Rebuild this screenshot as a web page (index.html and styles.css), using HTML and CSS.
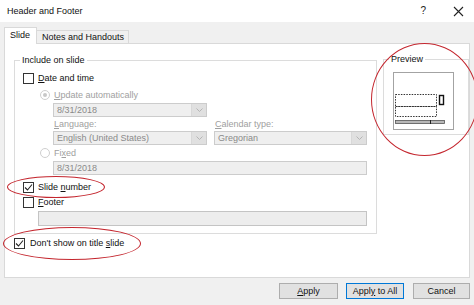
FILE: index.html
```html
<!DOCTYPE html>
<html>
<head>
<meta charset="utf-8">
<link rel="stylesheet" href="styles.css">
</head>
<body>
<div class="dialog">
  <div class="titlebar">
    <span class="title">Header and Footer</span>
    <span class="help">?</span>
    <svg class="close" width="11" height="11" viewBox="0 0 11 11"><path d="M1 1L10 10M10 1L1 10" stroke="#222" stroke-width="1.1" fill="none"/></svg>
  </div>
  <div class="tabs">
    <div class="tab active">Slide</div>
    <div class="tab">Notes and Handouts</div>
  </div>
  <div class="panel">
    <div class="panel-top">
      <div class="group include">
        <div class="legend">Include on slide</div>
        <div class="row r-date"><span class="cb"></span><span class="lbl"><u>D</u>ate and time</span></div>
        <div class="row r-update dis"><span class="rb on"></span><span class="lbl"><u>U</u>pdate automatically</span></div>
        <div class="select s-date"><span class="val">8/31/2018</span><span class="arrow"><svg width="7" height="4" viewBox="0 0 7 4"><path d="M0.5 0.5L3.5 3.5L6.5 0.5" stroke="#b5b5b5" fill="none"/></svg></span></div>
        <div class="two-col">
          <div class="col c-lang">
            <div class="flabel"><u>L</u>anguage:</div>
            <div class="select s-lang"><span class="val">English (United States)</span><span class="arrow"><svg width="7" height="4" viewBox="0 0 7 4"><path d="M0.5 0.5L3.5 3.5L6.5 0.5" stroke="#b5b5b5" fill="none"/></svg></span></div>
          </div>
          <div class="col c-cal">
            <div class="flabel"><u>C</u>alendar type:</div>
            <div class="select s-cal"><span class="val">Gregorian</span><span class="arrow"><svg width="7" height="4" viewBox="0 0 7 4"><path d="M0.5 0.5L3.5 3.5L6.5 0.5" stroke="#b5b5b5" fill="none"/></svg></span></div>
          </div>
        </div>
        <div class="row r-fixed dis"><span class="rb"></span><span class="lbl">Fi<u>x</u>ed</span></div>
        <div class="input i-fixed">8/31/2018</div>
        <div class="row r-slide"><span class="cb checked"><svg width="9" height="9" viewBox="0 0 9 9"><path d="M1 4.5L3.5 7L8 1.5" stroke="#222" stroke-width="1.1" fill="none"/></svg></span><span class="lbl">Slide <u>n</u>umber</span></div>
        <div class="row r-footer"><span class="cb"></span><span class="lbl"><u>F</u>ooter</span></div>
        <div class="input i-footer"></div>
      </div>
      <div class="group preview">
        <div class="legend">Preview</div>
        <svg class="pic" width="61" height="58" viewBox="0 0 61 58">
          <rect x="0.5" y="0.5" width="60" height="57" fill="#fff" stroke="#a3a3a3"/>
          <rect x="2.5" y="22.5" width="41" height="12" fill="none" stroke="#333" stroke-dasharray="1.5 1.2"/>
          <rect x="2.5" y="34.5" width="41" height="10" fill="none" stroke="#333" stroke-dasharray="1.5 1.2"/>
          <rect x="46.5" y="23.5" width="4" height="9" fill="none" stroke="#111" stroke-width="1.4"/>
          <rect x="2.5" y="48.5" width="49" height="3" fill="#b8b8b8" stroke="#555" stroke-width="0.8"/>
          <line x1="37.5" y1="48" x2="37.5" y2="52" stroke="#222"/>
        </svg>
      </div>
    </div>
    <div class="row r-title"><span class="cb checked"><svg width="9" height="9" viewBox="0 0 9 9"><path d="M1 4.5L3.5 7L8 1.5" stroke="#222" stroke-width="1.1" fill="none"/></svg></span><span class="lbl">Don't show on title <u>s</u>lide</span></div>
  </div>
  <div class="buttons">
    <div class="btn"><u>A</u>pply</div>
    <div class="btn default">Appl<u>y</u> to All</div>
    <div class="btn">Cancel</div>
  </div>
  <div class="mark m-preview"></div>
  <div class="mark m-slide"></div>
  <div class="mark m-title"></div>
</div>
</body>
</html>
```

FILE: styles.css
```css
html, body {
  margin: 0;
  padding: 0;
}
body {
  width: 474px;
  height: 305px;
  overflow: hidden;
  background: #f0f0f0;
  font-family: "Liberation Sans", Arial, sans-serif;
  font-size: 9px;
  line-height: 12px;
  color: #111;
}
u { text-decoration: underline; text-underline-offset: 1px; }

.dialog {
  position: relative;
  width: 474px;
  height: 305px;
  overflow: hidden;
}

.titlebar {
  height: 22px;
  background: #fff;
  display: flex;
  align-items: center;
  padding-left: 7px;
  box-sizing: border-box;
}
.title { font-size: 9px; color: #111; }
.help { margin-left: auto; margin-right: 27px; font-size: 10px; color: #222; }
.close { margin-right: 10px; }

.tabs {
  height: 21px;
  display: flex;
  align-items: flex-end;
  padding-left: 4px;
  box-sizing: border-box;
}
.tab {
  height: 12px;
  line-height: 12px;
  padding: 0 4px 0 5px;
  border: 1px solid #d9d9d9;
  border-bottom: none;
  background: #f0f0f0;
  position: relative;
}
.tab.active {
  height: 16px;
  line-height: 15px;
  background: #fff;
  padding: 0 6px 0 5px;
  margin-bottom: -1px;
  z-index: 1;
}
.tab + .tab { border-left: none; }

.panel {
  margin-left: 4px;
  width: 466px;
  height: 235px;
  box-sizing: border-box;
  background: #fff;
  border: 1px solid #d9d9d9;
}
.panel-top {
  display: flex;
  align-items: flex-start;
}

.group {
  border: 1px solid #dcdcdc;
  box-sizing: border-box;
}
.include {
  margin-left: 9px;
  margin-top: 16px;
  width: 363px;
  padding: 0 8px 7px 8px;
}
.preview {
  margin-left: 6px;
  margin-top: 15px;
  width: 86px;
  height: 76px;
  padding-left: 9px;
}
.legend {
  display: block;
  width: max-content;
  height: 12px;
  line-height: 12px;
  margin-top: -7px;
  margin-left: -3px;
  padding: 0 2px;
  background: #fff;
}
.preview .legend { margin-left: -4px; }
.pic { display: block; margin-top: 7px; }

.row {
  display: flex;
  align-items: center;
  height: 14px;
  line-height: 14px;
}
.lbl { margin-left: 4px; }
.cb {
  width: 11px;
  height: 11px;
  box-sizing: border-box;
  border: 1px solid #333;
  background: #fff;
  display: flex;
  align-items: center;
  justify-content: center;
  flex: none;
}
.rb {
  width: 10px;
  height: 10px;
  box-sizing: border-box;
  border: 1px solid #cfcfcf;
  border-radius: 50%;
  background: #fff;
  margin-left: 17px;
  flex: none;
  position: relative;
}
.rb.on::after {
  content: "";
  position: absolute;
  left: 2px; top: 2px;
  width: 4px; height: 4px;
  border-radius: 50%;
  background: #c8c8c8;
}
.dis .lbl { color: #a0a0a0; }

.r-date { margin-top: 5px; }
.r-update { margin-top: 3px; }
.r-fixed { margin-top: 1px; }
.r-slide { margin-top: 5px; }
.r-footer { margin-top: 1px; }
.r-title { margin-left: 9px; margin-top: 2px; }
.r-title .lbl { margin-left: 5px; }

.select, .input {
  height: 14px;
  box-sizing: border-box;
  border: 1px solid #cccccc;
  background: #efefef;
  color: #8a8a8a;
  display: flex;
  align-items: center;
}
.select .val, .input { padding-left: 3px; line-height: 12px; }
.select .val { flex: 1; }
.arrow {
  width: 14px;
  height: 12px;
  background: #e0e0e0;
  border-left: 1px solid #d8d8d8;
  display: flex;
  align-items: center;
  justify-content: center;
}
.s-date { margin-top: 1px; margin-left: 30px; width: 154px; }
.two-col { display: flex; margin-left: 30px; }
.c-lang { width: 154px; }
.c-cal { width: 153px; margin-left: 7px; }
.flabel { height: 14px; line-height: 15px; color: #a0a0a0; padding-left: 1px; }
.s-lang, .s-cal { width: 100%; }
.i-fixed { margin-top: 1px; margin-left: 30px; width: 314px; }
.i-footer { margin-top: 2px; margin-left: 15px; width: 329px; height: 15px; border-color: #c4c4c4; background: #ededed; }

.buttons {
  display: flex;
  justify-content: flex-end;
  gap: 8px;
  padding-right: 4px;
  margin-top: 5px;
}
.btn {
  width: 59px;
  height: 16px;
  box-sizing: border-box;
  border: 1px solid #adadad;
  background: #e1e1e1;
  text-align: center;
  line-height: 14px;
}
.btn.default { border-color: #0078d7; width: 58px; }
.btn:last-child { margin-left: 1px; width: 57px; }

.mark {
  position: absolute;
  border: 1.5px solid #c4262e;
  border-radius: 50%;
  box-sizing: border-box;
}
.m-preview { left: 371px; top: 43px; width: 107px; height: 113px; }
.m-slide { left: 7px; top: 176px; width: 98px; height: 22px; }
.m-title { left: 3px; top: 227px; width: 138px; height: 33px; }
```
